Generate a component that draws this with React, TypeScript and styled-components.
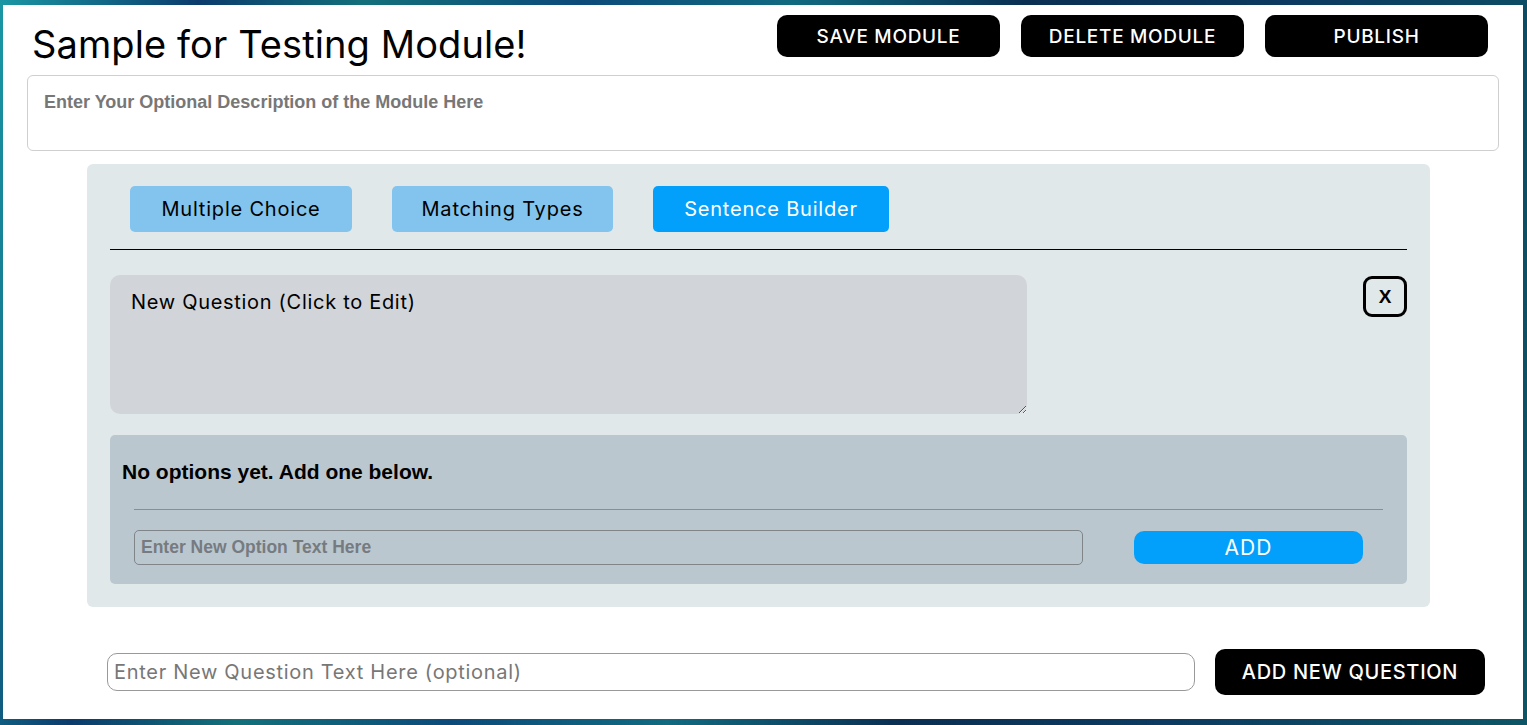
import React from 'react';
import styled, { createGlobalStyle } from 'styled-components';

const GlobalStyle = createGlobalStyle`
  html, body {
    margin: 0;
    padding: 0;
    height: 100%;
  }
  body {
    background: linear-gradient(
      100deg,
      #1a97a4 0%,
      #0b3b6c 12%,
      #13707a 22%,
      #0c4a7a 35%,
      #116a80 48%,
      #0a2f52 62%,
      #0c3a60 78%,
      #0d5566 100%
    );
    font-family: Inter, 'Noto Sans', sans-serif;
  }
  #root {
    padding: 5px 4px 6px 3px;
    box-sizing: border-box;
    height: 100vh;
  }
`;

const Frame = styled.div`
  background: #ffffff;
  height: 100%;
  box-sizing: border-box;
  padding: 10px 24px 0 24px;
  display: flex;
  flex-direction: column;
`;

const Header = styled.header`
  display: flex;
  justify-content: space-between;
  align-items: flex-start;
  height: 55px;
`;

const Title = styled.h1`
  margin: 7px 0 0 5px;
  font-size: 38px;
  font-weight: 400;
  line-height: 44px;
  color: #000;
  letter-spacing: 0.1px;
`;

const ButtonGroup = styled.div`
  display: flex;
  gap: 21px;
  margin-right: 11px;
`;

const DarkButton = styled.button<{ $w: number; $h: number }>`
  width: ${({ $w }) => $w}px;
  height: ${({ $h }) => $h}px;
  background: #000;
  color: #fff;
  border: none;
  border-radius: 10px;
  font-family: Inter, 'Noto Sans', sans-serif;
  font-size: ${({ $h }) => ($h > 44 ? 20 : 19)}px;
  font-weight: 500;
  letter-spacing: 0.7px;
  cursor: pointer;
`;

const Description = styled.textarea`
  display: block;
  height: 76px;
  box-sizing: border-box;
  border: 1px solid #cfcfcf;
  border-radius: 6px;
  padding: 16px 16px;
  resize: none;
  font-family: 'Liberation Sans', Arial, sans-serif;
  font-weight: 700;
  font-size: 18px;
  margin-top: 5px;
  &::placeholder {
    color: #777;
  }
`;

const Panel = styled.section`
  width: 1343px;
  box-sizing: border-box;
  margin: 13px 0 0 60px;
  background: #e0e8ea;
  border-radius: 6px;
  padding: 22px 23px 23px;
`;

const Tabs = styled.div`
  display: flex;
  gap: 40px;
  padding-left: 20px;
  padding-bottom: 17px;
  border-bottom: 1px solid #000;
`;

const Tab = styled.button<{ $active?: boolean; $w: number }>`
  width: ${({ $w }) => $w}px;
  height: 46px;
  border: none;
  border-radius: 5px;
  background: ${({ $active }) => ($active ? '#03a0fb' : '#82c4ee')};
  color: ${({ $active }) => ($active ? '#fff' : '#000')};
  font-family: Inter, 'Noto Sans', sans-serif;
  font-size: 20px;
  font-weight: 400;
  letter-spacing: 0.8px;
  padding: 0;
  cursor: pointer;
`;

const QuestionRow = styled.div`
  display: flex;
  justify-content: space-between;
  align-items: flex-start;
  margin-top: 25px;
`;

const QuestionText = styled.textarea`
  width: 917px;
  height: 139px;
  box-sizing: border-box;
  background: #d1d5d9;
  border: none;
  border-radius: 10px;
  padding: 15px 21px;
  font-family: Inter, 'Noto Sans', sans-serif;
  font-size: 20px;
  letter-spacing: 0.7px;
  color: #000;
  outline: none;
`;

const CloseButton = styled.button`
  width: 44px;
  height: 41px;
  margin-top: 1px;
  box-sizing: border-box;
  border: 3px solid #000;
  border-radius: 9px;
  background: transparent;
  font-family: 'Liberation Sans', Arial, sans-serif;
  font-weight: 700;
  font-size: 19px;
  color: #000;
  padding: 0;
  cursor: pointer;
`;

const Options = styled.div`
  margin-top: 21px;
  background: #bbc7cf;
  border-radius: 5px;
  padding: 25px 24px 19px 12px;
`;

const EmptyText = styled.p`
  margin: 0;
  font-family: 'Liberation Sans', Arial, sans-serif;
  font-weight: 700;
  font-size: 21px;
  line-height: 24px;
  color: #000;
`;

const OptionDivider = styled.hr`
  margin: 25px 0 20px 12px;
  border: none;
  border-top: 1px solid #878f95;
`;

const AddRow = styled.div`
  display: flex;
  align-items: center;
  justify-content: space-between;
  padding: 0 20px 0 12px;
`;

const OptionInput = styled.input`
  width: 949px;
  height: 35px;
  box-sizing: border-box;
  background: transparent;
  border: 1px solid #7f8589;
  border-radius: 5px;
  padding: 0 6px;
  font-family: 'Liberation Sans', Arial, sans-serif;
  font-weight: 700;
  font-size: 17.5px;
  &::placeholder {
    color: #767b80;
  }
`;

const AddButton = styled.button`
  width: 229px;
  height: 33px;
  border: none;
  border-radius: 10px;
  background: #03a0fb;
  color: #fff;
  font-family: Inter, 'Noto Sans', sans-serif;
  font-size: 21px;
  font-weight: 400;
  letter-spacing: 1px;
  padding: 0;
  cursor: pointer;
`;

const Footer = styled.div`
  display: flex;
  align-items: center;
  gap: 20px;
  margin: 42px 0 0 80px;
`;

const QuestionInput = styled.input`
  width: 1088px;
  height: 38px;
  box-sizing: border-box;
  border: 1px solid #999;
  border-radius: 10px;
  padding: 0 6px;
  font-family: Inter, 'Noto Sans', sans-serif;
  font-size: 20px;
  letter-spacing: 0.7px;
  &::placeholder {
    color: #777;
  }
`;

export default function App() {
  return (
    <>
      <GlobalStyle />
      <Frame>
        <Header>
          <Title>Sample for Testing Module!</Title>
          <ButtonGroup>
            <DarkButton $w={223} $h={42}>SAVE MODULE</DarkButton>
            <DarkButton $w={223} $h={42}>DELETE MODULE</DarkButton>
            <DarkButton $w={223} $h={42}>PUBLISH</DarkButton>
          </ButtonGroup>
        </Header>
        <Description placeholder="Enter Your Optional Description of the Module Here" />
        <Panel>
          <Tabs>
            <Tab $w={222}>Multiple Choice</Tab>
            <Tab $w={221}>Matching Types</Tab>
            <Tab $w={236} $active>
              Sentence Builder
            </Tab>
          </Tabs>
          <QuestionRow>
            <QuestionText defaultValue="New Question (Click to Edit)" />
            <CloseButton>X</CloseButton>
          </QuestionRow>
          <Options>
            <EmptyText>No options yet. Add one below.</EmptyText>
            <OptionDivider />
            <AddRow>
              <OptionInput placeholder="Enter New Option Text Here" />
              <AddButton>ADD</AddButton>
            </AddRow>
          </Options>
        </Panel>
        <Footer>
          <QuestionInput placeholder="Enter New Question Text Here (optional)" />
          <DarkButton $w={270} $h={46}>ADD NEW QUESTION</DarkButton>
        </Footer>
      </Frame>
    </>
  );
}
